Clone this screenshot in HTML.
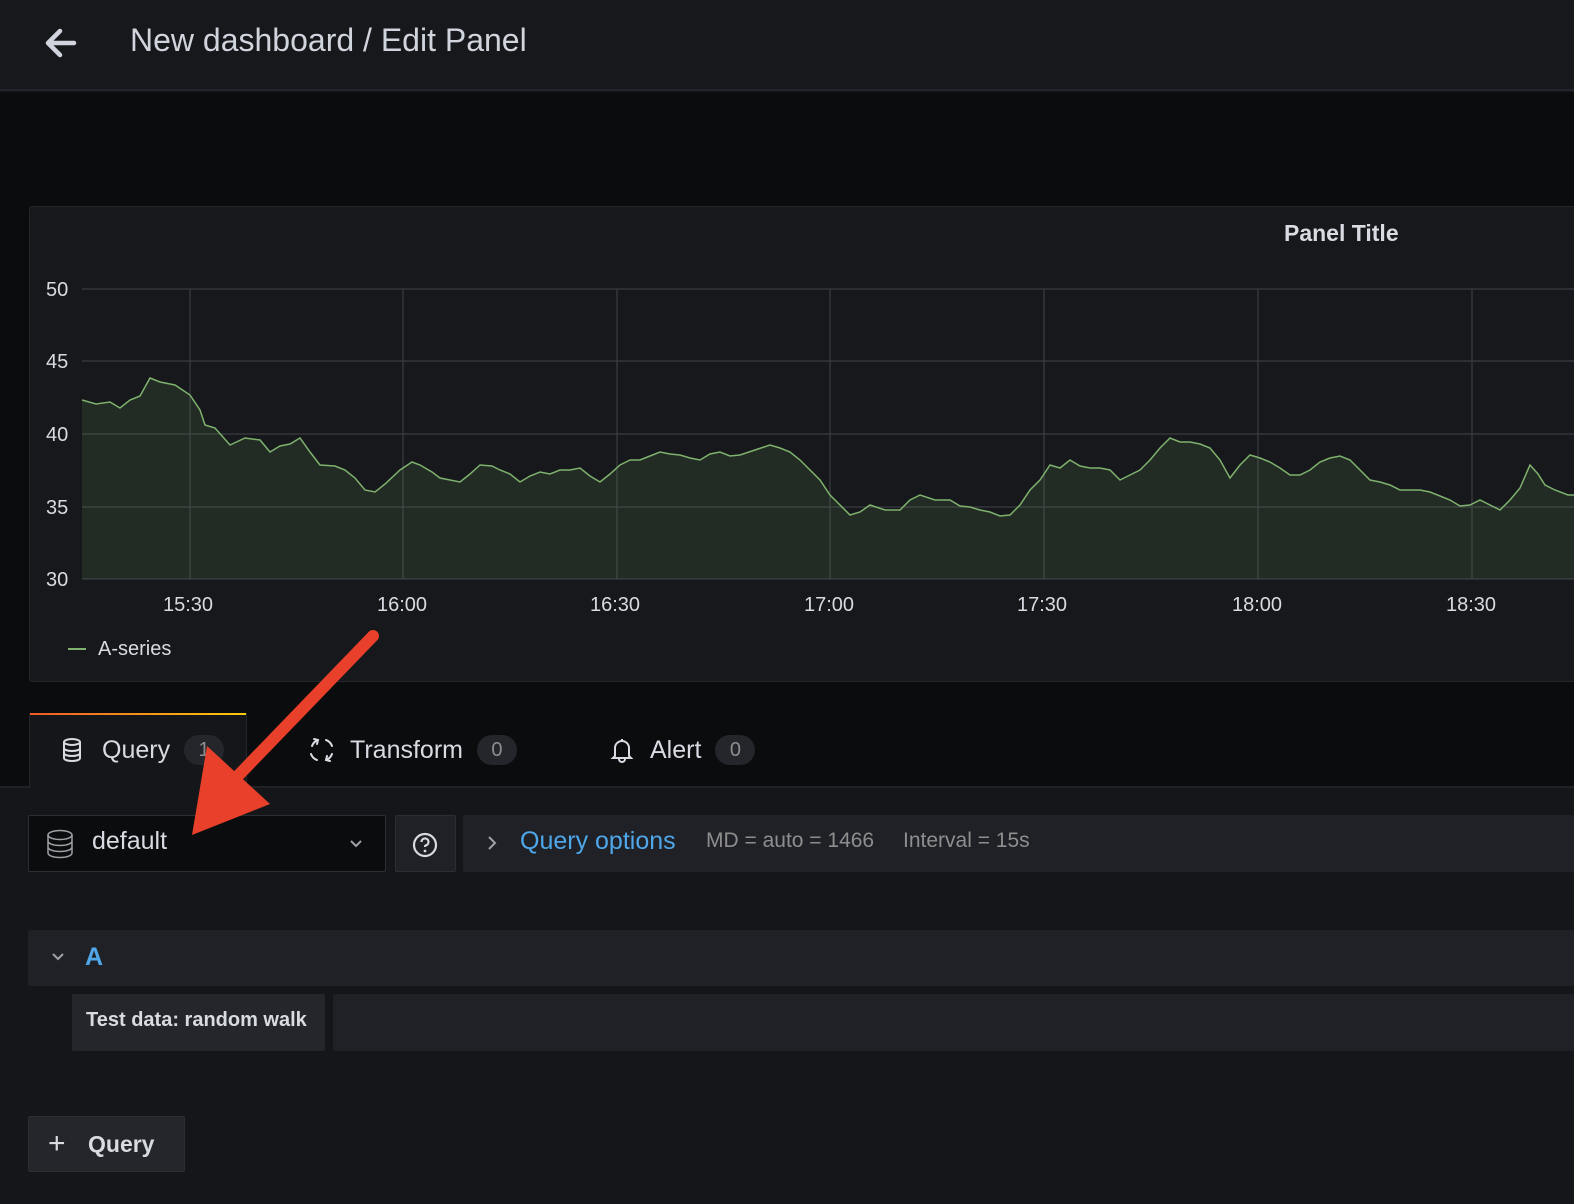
<!DOCTYPE html>
<html><head><meta charset="utf-8"><style>
*{box-sizing:border-box;margin:0;padding:0}
body{width:1574px;height:1204px;overflow:hidden;background:#141619;font-family:"Liberation Sans",sans-serif;color:#ccccdc;position:relative}
.hdr{position:absolute;left:0;top:0;width:1574px;height:91px;background:#17181c;border-bottom:2px solid #22252b}
.hdr .t{position:absolute;left:130px;top:22px;font-size:32px;color:#d0d4dc}
.top{position:absolute;left:0;top:92px;width:1574px;height:694px;background:#0b0c0e}
.panel{position:absolute;left:29px;top:206px;width:1560px;height:476px;background:#17181c;border:1px solid #24262b;border-radius:3px}
.tab{position:absolute;top:713px;height:74px;font-size:25px;color:#d8dbe2;display:flex;align-items:center}
.badge{display:inline-block;background:#24262b;color:#8e8e8e;border-radius:16px;width:40px;height:30px;text-align:center;line-height:30px;font-size:20px;margin-left:14px}
.box{position:absolute;border-radius:2px}
</style></head><body>
<div class="hdr">
<svg style="position:absolute;left:40px;top:24px" width="40" height="40" viewBox="0 0 40 40"><path d="M34 19H9M20 7L8 19l12 12" stroke="#d0d4dc" stroke-width="4.5" fill="none" stroke-linecap="round" stroke-linejoin="round"/></svg>
<div class="t">New dashboard / Edit Panel</div>
</div>
<div class="top"></div>
<div class="panel">
<div style="position:absolute;left:1254px;top:13px;font-size:23px;font-weight:bold;color:#d8dbe2">Panel Title</div>
</div>
<svg style="position:absolute;left:0;top:0" width="1574" height="700">
<g stroke="#3a3c42" stroke-width="1.2">
<line x1="82" y1="289" x2="1574" y2="289"/><line x1="82" y1="361" x2="1574" y2="361"/><line x1="82" y1="434" x2="1574" y2="434"/><line x1="82" y1="507" x2="1574" y2="507"/><line x1="82" y1="579" x2="1574" y2="579"/>
<line x1="190" y1="289" x2="190" y2="579"/><line x1="403" y1="289" x2="403" y2="579"/><line x1="617" y1="289" x2="617" y2="579"/><line x1="830" y1="289" x2="830" y2="579"/><line x1="1044" y1="289" x2="1044" y2="579"/><line x1="1258" y1="289" x2="1258" y2="579"/><line x1="1472" y1="289" x2="1472" y2="579"/>
</g>
<g fill="#d8dbe2" font-size="20" font-family="Liberation Sans">
<text x="46" y="296">50</text><text x="46" y="368">45</text><text x="46" y="441">40</text><text x="46" y="514">35</text><text x="46" y="586">30</text>
<text x="163" y="611">15:30</text><text x="377" y="611">16:00</text><text x="590" y="611">16:30</text><text x="804" y="611">17:00</text><text x="1017" y="611">17:30</text><text x="1232" y="611">18:00</text><text x="1446" y="611">18:30</text>
<text x="98" y="655">A-series</text>
</g>
<line x1="68" y1="649" x2="86" y2="649" stroke="#7eb26d" stroke-width="2"/>
<polygon fill="#7eb26d" fill-opacity="0.12" points="82,579 82,400 96,404 110,402 120,408 130,400 140,396 150,378 160,382 175,385 190,395 200,410 205,425 215,428 230,445 245,438 260,440 270,452 280,446 290,444 300,438 310,452 320,465 335,466 345,470 355,478 365,490 375,492 385,484 400,470 412,462 420,465 432,472 440,478 450,480 460,482 470,474 480,465 492,466 500,470 510,474 520,482 530,476 540,472 550,474 560,470 570,470 580,468 590,476 600,482 610,474 620,465 630,460 640,460 650,456 660,452 670,454 680,455 690,458 700,460 710,454 720,452 730,456 740,455 755,450 770,445 780,448 790,452 800,460 810,470 820,480 830,495 840,505 850,515 860,512 870,505 885,510 900,510 910,500 920,495 935,500 950,500 960,506 970,507 980,510 990,512 1000,516 1010,515 1020,505 1030,490 1040,480 1050,465 1060,468 1070,460 1080,466 1090,468 1100,468 1110,470 1120,480 1130,475 1140,470 1150,460 1160,448 1170,438 1180,442 1190,442 1200,444 1210,448 1220,460 1230,478 1240,465 1250,455 1260,458 1270,462 1280,468 1290,475 1300,475 1310,470 1320,462 1330,458 1340,456 1350,460 1360,470 1370,480 1380,482 1390,485 1400,490 1410,490 1420,490 1430,492 1440,496 1450,500 1460,506 1470,505 1480,500 1490,505 1500,510 1510,500 1520,488 1530,465 1538,474 1545,485 1555,490 1568,495 1574,495 1574,579"/>
<polyline fill="none" stroke="#7eb26d" stroke-width="1.5" points="82,400 96,404 110,402 120,408 130,400 140,396 150,378 160,382 175,385 190,395 200,410 205,425 215,428 230,445 245,438 260,440 270,452 280,446 290,444 300,438 310,452 320,465 335,466 345,470 355,478 365,490 375,492 385,484 400,470 412,462 420,465 432,472 440,478 450,480 460,482 470,474 480,465 492,466 500,470 510,474 520,482 530,476 540,472 550,474 560,470 570,470 580,468 590,476 600,482 610,474 620,465 630,460 640,460 650,456 660,452 670,454 680,455 690,458 700,460 710,454 720,452 730,456 740,455 755,450 770,445 780,448 790,452 800,460 810,470 820,480 830,495 840,505 850,515 860,512 870,505 885,510 900,510 910,500 920,495 935,500 950,500 960,506 970,507 980,510 990,512 1000,516 1010,515 1020,505 1030,490 1040,480 1050,465 1060,468 1070,460 1080,466 1090,468 1100,468 1110,470 1120,480 1130,475 1140,470 1150,460 1160,448 1170,438 1180,442 1190,442 1200,444 1210,448 1220,460 1230,478 1240,465 1250,455 1260,458 1270,462 1280,468 1290,475 1300,475 1310,470 1320,462 1330,458 1340,456 1350,460 1360,470 1370,480 1380,482 1390,485 1400,490 1410,490 1420,490 1430,492 1440,496 1450,500 1460,506 1470,505 1480,500 1490,505 1500,510 1510,500 1520,488 1530,465 1538,474 1545,485 1555,490 1568,495 1574,495"/>
</svg>
<div style="position:absolute;left:0;top:786px;width:1574px;height:2px;background:#202226"></div>
<div style="position:absolute;left:29px;top:713px;width:218px;height:75px;background:#24262b"></div>
<div style="position:absolute;left:30px;top:713px;width:216px;height:2px;background:linear-gradient(90deg,#f05a28,#fbca0a)"></div>
<div style="position:absolute;left:30px;top:715px;width:216px;height:73px;background:#141619"></div>
<div class="tab" style="left:60px"><svg width="24" height="26" viewBox="0 0 24 26" style="margin-right:18px"><g fill="none" stroke="#d8dbe2" stroke-width="2"><ellipse cx="12" cy="5" rx="8" ry="3"/><path d="M4 5v16c0 2 4 3 8 3s8-1 8-3V5M4 11c0 2 4 3 8 3s8-1 8-3M4 16c0 2 4 3 8 3s8-1 8-3"/></g></svg>Query<span class="badge">1</span></div>
<div class="tab" style="left:308px"><svg width="28" height="28" viewBox="0 0 28 28" style="margin-right:14px"><g fill="none" stroke="#d8dbe2" stroke-width="2" stroke-linecap="round"><path d="M4 10a10 10 0 0 1 6-6M6 3l4 1-1 4M24 18a10 10 0 0 1-6 6M22 25l-4-1 1-4M18 4a10 10 0 0 1 6 6M3 18a10 10 0 0 0 6 6"/></g></svg>Transform<span class="badge">0</span></div>
<div class="tab" style="left:610px"><svg width="24" height="26" viewBox="0 0 24 26" style="margin-right:16px"><g fill="none" stroke="#d8dbe2" stroke-width="2"><path d="M5 19V11a7 7 0 0 1 14 0v8l2 2H3zM9 22a3 3 0 0 0 6 0M12 2v2"/></g></svg>Alert<span class="badge">0</span></div>
<div class="box" style="left:28px;top:815px;width:358px;height:57px;background:#0b0c0e;border:1px solid #2c2e33"></div>
<svg style="position:absolute;left:44px;top:828px" width="32" height="32" viewBox="0 0 32 32"><g fill="none" stroke="#9fa1a7" stroke-width="1.5"><ellipse cx="16" cy="7" rx="12" ry="4.5"/><path d="M4 7v18c0 2.5 5 4.5 12 4.5s12-2 12-4.5V7M4 13c0 2.5 5 4.5 12 4.5s12-2 12-4.5M4 19c0 2.5 5 4.5 12 4.5s12-2 12-4.5"/></g></svg>
<div style="position:absolute;left:92px;top:827px;font-size:25px;color:#d8dbe2">default</div>
<svg style="position:absolute;left:348px;top:838px" width="16" height="12" viewBox="0 0 16 12"><path d="M3 3l5 5 5-5" stroke="#9fa1a7" stroke-width="2" fill="none"/></svg>
<div class="box" style="left:395px;top:815px;width:61px;height:57px;background:#1f2126;border:1px solid #2c2e33"></div>
<svg style="position:absolute;left:411px;top:831px" width="28" height="28" viewBox="0 0 28 28"><circle cx="14" cy="14" r="11" fill="none" stroke="#d8dbe2" stroke-width="2.2"/><path d="M10.5 11a3.5 3.5 0 1 1 4.5 3.3c-.8.3-1 .8-1 1.7" fill="none" stroke="#d8dbe2" stroke-width="2.2"/><circle cx="14" cy="20" r="1.4" fill="#d8dbe2"/></svg>
<div class="box" style="left:463px;top:815px;width:1111px;height:57px;background:#1f2126"></div>
<svg style="position:absolute;left:484px;top:834px" width="16" height="18" viewBox="0 0 16 18"><path d="M5 3l6 6-6 6" stroke="#9fa1a7" stroke-width="2" fill="none"/></svg>
<div style="position:absolute;left:520px;top:827px;font-size:25px;color:#4fa6e8">Query options</div>
<div style="position:absolute;left:706px;top:829px;font-size:21px;color:#8e8e8e">MD = auto = 1466</div>
<div style="position:absolute;left:903px;top:829px;font-size:21px;color:#8e8e8e">Interval = 15s</div>
<div class="box" style="left:28px;top:930px;width:1546px;height:56px;background:#1f2126"></div>
<svg style="position:absolute;left:50px;top:950px" width="16" height="14" viewBox="0 0 16 14"><path d="M3 4l5 5 5-5" stroke="#9fa1a7" stroke-width="2" fill="none"/></svg>
<div style="position:absolute;left:85px;top:943px;font-size:25px;font-weight:bold;color:#4fa6e8">A</div>
<div class="box" style="left:72px;top:994px;width:253px;height:57px;background:#24262b"></div>
<div style="position:absolute;left:86px;top:1009px;font-size:20px;font-weight:bold;color:#d8dbe2">Test data: random walk</div>
<div class="box" style="left:333px;top:994px;width:1241px;height:57px;background:#1f2126"></div>
<div class="box" style="left:28px;top:1116px;width:157px;height:56px;background:#24262b;border:1px solid #2c2e33"></div>
<div style="position:absolute;left:48px;top:1127px;font-size:30px;color:#d8dbe2">+</div>
<div style="position:absolute;left:88px;top:1131px;font-size:23px;font-weight:bold;color:#d8dbe2">Query</div>
<svg style="position:absolute;left:0;top:0" width="1574" height="1204"><path d="M373 636L232 782" stroke="#e8402a" stroke-width="12" stroke-linecap="round"/><polygon points="192,835 270,804 207,746" fill="#e8402a"/></svg>
</body></html>
